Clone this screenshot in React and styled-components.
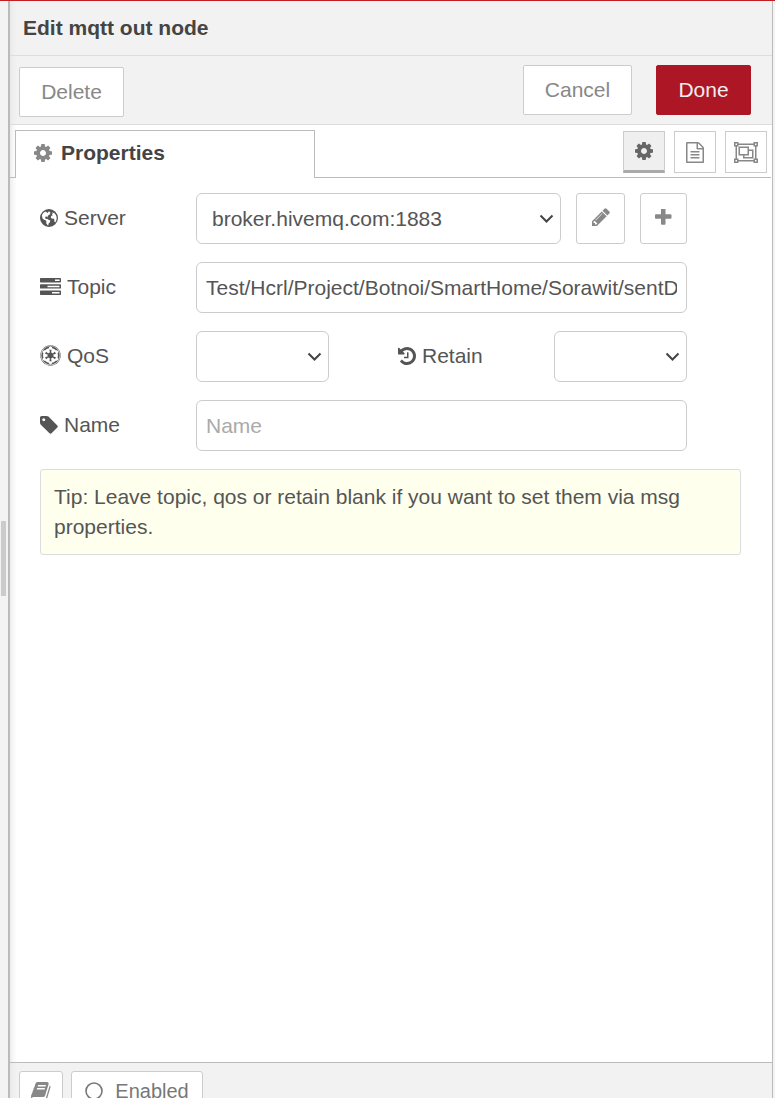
import React from "react";
import styled, { createGlobalStyle } from "styled-components";
import { FaEmpire } from "react-icons/fa";

const Global = createGlobalStyle`
  *, *::before, *::after { box-sizing: border-box; }
  body { margin: 0; background: #f3f3f3; overflow: hidden; }
  body, button, input { font-family: "Liberation Sans", Arial, sans-serif; font-size: 21px; color: #555; }
`;

const Page = styled.div`
  height: 1098px;
  display: flex;
  border-top: 1px solid #c02020;
  background: #f3f3f3;
  overflow: hidden;
`;
const Gutter = styled.div`
  width: 8px;
  flex: none;
  padding-top: 520px;
`;
const ScrollThumb = styled.div`
  width: 5px;
  height: 75px;
  margin-left: 1px;
  background: #cbcbcb;
`;
const Tray = styled.main`
  width: 765px;
  flex: none;
  display: flex;
  flex-direction: column;
  background: #fff;
  border-left: 2px solid #bbb;
  border-right: 1px solid #bbb;
  box-shadow: inset 7px 0 7px -6px rgba(0, 0, 0, 0.12);
`;
const Header = styled.header`
  height: 55px;
  padding: 0 13px 1px;
  display: flex;
  align-items: center;
  font-weight: bold;
  color: #444;
  background: rgba(229, 229, 229, 0.5);
  border-bottom: 1px solid #ddd;
`;
const Toolbar = styled.div`
  height: 69px;
  padding: 9px 21px 0 9px;
  display: flex;
  align-items: flex-start;
  background: rgba(229, 229, 229, 0.5);
  border-bottom: 1px solid #ddd;
`;
const Button = styled.button`
  width: ${(p) => p.$width}px;
  height: 50px;
  padding: 0;
  margin: ${(p) => p.$margin || 0};
  border: 1px solid ${(p) => (p.$primary ? "#ad1625" : "#ccc")};
  border-radius: 2px;
  background: ${(p) => (p.$primary ? "#ad1625" : "#fff")};
  color: ${(p) => (p.$primary ? "#eee" : "#888")};
`;
const TabBar = styled.div`
  height: 53px;
  padding: 5px 5px 0 0;
  margin-right: 1px;
  display: flex;
`;
const TabLine = styled.div`
  width: ${(p) => p.$width}px;
  flex: ${(p) => (p.$width ? "none" : 1)};
  display: flex;
  justify-content: flex-end;
  gap: 9px;
  padding: 1px 0 0;
  border-bottom: 1px solid #bbb;
  margin-right: ${(p) => (p.$width ? 0 : "-5px")};
  padding-right: ${(p) => (p.$width ? 0 : "4px")};
`;
const Tab = styled.div`
  width: 300px;
  padding: 0 0 3px 18px;
  display: flex;
  align-items: center;
  gap: 9px;
  border: 1px solid #bbb;
  border-bottom: 0;
  font-weight: bold;
  color: #444;
`;
const TabButton = styled.button`
  width: 42px;
  height: 42px;
  padding: 0;
  display: flex;
  align-items: center;
  justify-content: center;
  border: 1px solid #ccc;
  border-bottom: ${(p) => (p.$active ? "3px solid #aaa" : "1px solid #ccc")};
  background: ${(p) => (p.$active ? "#efefef" : "#fff")};
  color: ${(p) => (p.$active ? "#666" : "#888")};
`;
const Form = styled.form`
  flex: 1;
  padding: 15px 31px 0 30px;
`;
const Row = styled.div`
  height: 51px;
  margin-bottom: 18px;
  display: flex;
  align-items: stretch;
`;
const Label = styled.label`
  width: 156px;
  padding-bottom: 2px;
  display: flex;
  align-items: center;
  gap: ${(p) => p.$gap || 6}px;
`;
const Select = styled.div`
  width: ${(p) => p.$width}px;
  padding: 0 6px 0 15px;
  margin-right: ${(p) => p.$after || 0}px;
  display: flex;
  align-items: center;
  justify-content: space-between;
  border: 1px solid #ccc;
  border-radius: 6px;
`;
const Input = styled.input`
  width: 491px;
  padding: 0 9px;
  border: 1px solid #ccc;
  border-radius: 6px;
  background: transparent;
  outline: none;
  &::placeholder { color: #aaa; opacity: 1; }
`;
const SquareButton = styled.button`
  width: ${(p) => p.$width}px;
  margin-left: 15px;
  padding: 0 0 3px;
  display: flex;
  align-items: center;
  justify-content: center;
  border: 1px solid #ccc;
  border-radius: 3px;
  background: #fff;
  color: #888;
`;
const Tip = styled.div`
  width: 701px;
  height: 86px;
  padding: 12px 13px;
  border: 1px solid #ddd;
  border-radius: 3px;
  background: #ffffee;
  line-height: 30px;
`;
const Footer = styled.footer`
  height: 36px;
  flex: none;
  padding: 8px 9px 0;
  display: flex;
  gap: 8px;
  border-top: 1px solid #bbb;
  background: rgba(229, 229, 229, 0.5);
`;
const FooterButton = styled.button`
  width: ${(p) => p.$width}px;
  height: 42px;
  flex: none;
  padding: 0 0 2px;
  display: flex;
  align-items: center;
  justify-content: center;
  gap: 12px;
  border: 1px solid #ccc;
  border-radius: 3px;
  background: #fff;
  color: ${(p) => p.$color || "#777"};
  font-size: 20px;
`;
const Svg = styled.svg`
  display: block;
  flex: none;
  fill: currentColor;
`;

const paths = {
  cog: "M1152 896q0-106-75-181t-181-75-181 75-75 181 75 181 181 75 181-75 75-181zm512-109v222q0 12-8 23t-20 13l-185 28q-19 54-39 91 35 50 107 138 10 12 10 25t-9 23q-27 37-99 108t-94 71q-12 0-26-9l-138-108q-44 23-91 38-16 136-29 186-7 28-36 28h-222q-14 0-24.5-8.5t-11.5-21.5l-28-184q-49-16-90-37l-141 107q-10 9-25 9-14 0-25-11-126-114-165-168-7-10-7-23 0-12 8-23 15-21 51-66.5t54-70.5q-27-50-41-99l-183-27q-13-2-21-12.5t-8-23.5v-222q0-12 8-23t19-13l186-28q14-46 39-92-40-57-107-138-10-12-10-24 0-10 9-23 26-36 98.5-107.5t94.5-71.5q13 0 26 10l138 107q44-23 91-38 16-136 29-186 7-28 36-28h222q14 0 24.5 8.5t11.5 21.5l28 184q49 16 90 37l142-107q9-9 24-9 13 0 25 10 129 119 165 170 7 8 7 22 0 12-8 23-15 21-51 66.5t-54 70.5q26 50 41 98l183 28q13 2 21 12.5t8 23.5z",
  file: "M1596 380q28 28 48 76t20 88v1152q0 40-28 68t-68 28h-1344q-40 0-68-28t-28-68v-1600q0-40 28-68t68-28h896q40 0 88 20t76 48zm-444-244v376h376q-10-29-22-41l-313-313q-12-12-41-22zm384 1528v-1024h-416q-40 0-68-28t-28-68v-416h-768v1536h1280zm-1024-864q0-14 9-23t23-9h704q14 0 23 9t9 23v64q0 14-9 23t-23 9h-704q-14 0-23-9t-9-23v-64zm736 224q14 0 23 9t9 23v64q0 14-9 23t-23 9h-704q-14 0-23-9t-9-23v-64q0-14 9-23t23-9h704zm0 256q14 0 23 9t9 23v64q0 14-9 23t-23 9h-704q-14 0-23-9t-9-23v-64q0-14 9-23t23-9h704z",
  pencil: "M491 1536l91-91-235-235-91 91v107h128v128h107zm523-928q0-22-22-22-10 0-17 7l-542 542q-7 7-7 17 0 22 22 22 10 0 17-7l542-542q7-7 7-17zm-54-192l416 416-832 832h-416v-416zm683 96q0 53-37 90l-166 166-416-416 166-165q36-38 90-38 53 0 91 38l235 234q37 39 37 91z",
  plus: "M1600 736v192q0 40-28 68t-68 28h-416v416q0 40-28 68t-68 28h-192q-40 0-68-28t-28-68v-416h-416q-40 0-68-28t-28-68v-192q0-40 28-68t68-28h416v-416q0-40 28-68t68-28h192q40 0 68 28t28 68v416h416q40 0 68 28t28 68z",
  tag: "M576 448q0-53-37.5-90.5t-90.5-37.5-90.5 37.5-37.5 90.5 37.5 90.5 90.5 37.5 90.5-37.5 37.5-90.5zm1067 576q0 53-37 90l-491 492q-39 37-91 37-53 0-90-37l-715-716q-38-37-64.5-101t-26.5-117v-416q0-52 38-90t90-38h416q53 0 117 26.5t102 64.5l715 714q37 39 37 91z",
  history: "M1664 896q0 156-61 298t-164 245-245 164-298 61q-172 0-327-72.5t-264-204.5q-7-10-6.5-22.5t8.5-20.5l137-138q10-9 25-9 16 2 23 12 73 95 179 147t225 52q104 0 198.5-40.5t163.5-109.5 109.5-163.5 40.5-198.5-40.5-198.5-109.5-163.5-163.5-109.5-198.5-40.5q-98 0-188 35.5t-160 101.5l137 138q31 30 14 69-17 40-59 40h-448q-26 0-45-19t-19-45v-448q0-42 40-59 39-17 69 14l130 129q107-101 244.5-156.5t284.5-55.5q156 0 298 61t245 164 164 245 61 298zm-640-288v448q0 14-9 23t-23 9h-320q-14 0-23-9t-9-23v-64q0-14 9-23t23-9h224v-352q0-14 9-23t23-9h64q14 0 23 9t9 23z",
  book: "M1703 478q40 57 18 129l-275 906q-19 64-76.5 107.5t-122.5 43.5h-923q-77 0-148.5-53.5t-99.5-131.5q-24-67-2-127 0-4 3-27t4-37q1-8-3-21.5t-3-19.5q2-11 8-21t16.5-23.5 16.5-23.5q23-38 45-91.5t30-91.5q3-10 .5-30t-.5-28q3-11 17-28t17-23q21-36 42-92t25-90q1-9-2.5-32t.5-28q4-13 22-30.5t22-22.5q19-26 42.5-84.5t27.5-96.5q1-8-3-25.5t-2-26.5q2-8 9-18t18-23 17-21q8-12 16.5-30.5t15-35 16-36 19.5-32 26.5-23.5 36-11.5 47.5 5.5l-1 3q38-9 51-9h761q74 0 114 56t18 130l-274 906q-36 119-71.5 153.5t-128.5 34.5h-869q-27 0-38 15-11 16-1 43 24 70 144 70h923q29 0 56-15.5t35-41.5l300-987q7-22 5-57 38 15 59 43zm-1064 2q-4 13 2 22.5t20 9.5h608q13 0 25.5-9.5t16.5-22.5l21-64q4-13-2-22.5t-20-9.5h-608q-13 0-25.5 9.5t-16.5 22.5zm-83 256q-4 13 2 22.5t20 9.5h608q13 0 25.5-9.5t16.5-22.5l21-64q4-13-2-22.5t-20-9.5h-608q-13 0-25.5 9.5t-16.5 22.5z",
};

/* Each glyph is cropped to its own advance box: x, y, width, height in 1792 units. */
const boxes = {
  cog: [128, 128, 1536, 1536],
  file: [128, 0, 1536, 1792],
  pencil: [128, 128, 1536, 1536],
  plus: [192, 192, 1408, 1408],
  tag: [128, 128, 1536, 1536],
  history: [128, 128, 1536, 1536],
  book: [64, 128, 1664, 1536],
};

function Icon({ name, scale = 85.33 }) {
  const b = boxes[name];
  return (
    <Svg width={b[2] / scale} height={b[3] / scale} viewBox={b.join(" ")}>
      <path d={paths[name]} />
    </Svg>
  );
}

const Globe = () => (
  <Svg width="18" height="18" viewBox="0 0 18 18">
    <path fillRule="evenodd" d="M9 0a9 9 0 1 1 0 18A9 9 0 0 1 9 0zM5.4 2.4 3.2 4 1.9 6.3l.5 2.9 1.6 1.5 1.6.6.8 1.3-.2 1.6 1.4 2 .7.2.2-1.7 1.5-1.6.3-1.5-1.8-.9-1.4-.9-1.2.1-.8-1 .3-1.2 1.5-.1.5.8.5-1.6 1.6-1.2 1.1-.7-.9-.8.8-.6-1.2-1-1 .2-.4 1.2-1.3-.7zM12 3.2l.8 1.2-.9.8.8 1-1.5.7-.4 1.7 1.2 1.1 1.6-.2.7 1 .1 2.2.8.7 1.2-2.1.3-2.7-.7-2.4-1.5-2z" />
  </Svg>
);

const Tasks = () => (
  <Svg width="21" height="17" viewBox="0 0 21 17">
    <path fillRule="evenodd" d="M.7 0h19.6q.7 0 .7.7v3q0 .7-.7.7H.7Q0 4.400 0 3.700v-3Q0 0 .7 0zM15 1.500v1.500h4.600V1.500zM.7 6.200h19.6q.7 0 .7.7v3q0 .7-.7.7H.7q-.7 0-.7-.7v-3q0-.7.7-.7zM7.500 7.700v1.500h12V7.700zM.7 12.500h19.6q.7 0 .7.700v3q0 .7-.7.7H.7q-.7 0-.7-.7v-3q0-.7.7-.7zM12 14v1.500h7.500V14z" />
  </Svg>
);

const ObjectGroup = () => (
  <Svg width="24" height="21" viewBox="0 0 2048 1792">
    <path fillRule="evenodd" d="M2048 384h-128v1024h128v384h-384v-128H384v128H0v-384h128V384H0V0h384v128h1280V0h384zM1792 128v128h128V128zM128 128v128h128V128zM256 1664v-128H128v128zM1664 1536v-128h128V384h-128V256H384v128H256v1024h128v128zM1920 1664v-128h-128v128zM1280 640h384v768H768v-256H384V384h896zM512 1024h640V512H512zM1536 1280V768h-256v384H896v128z" />
  </Svg>
);

const Chevron = () => (
  <Svg width="15" height="9" viewBox="0 0 15 9">
    <path d="M1.500 1.500 7.500 7.500 13.500 1.500" fill="none" stroke="#444" strokeWidth="2" />
  </Svg>
);

export default function App() {
  return (
    <>
      <Global />
      <Page>
        <Gutter><ScrollThumb /></Gutter>
        <Tray>
          <Header>Edit mqtt out node</Header>
          <Toolbar>
            <Button $width={105} $margin="2px auto 0 0">Delete</Button>
            <Button $width={109} $margin="0 24px 0 0">Cancel</Button>
            <Button $width={95} $primary>Done</Button>
          </Toolbar>
          <TabBar>
            <TabLine $width={5} />
            <Tab><Svg as="span" style={{ color: "#888" }}><Icon name="cog" /></Svg>Properties</Tab>
            <TabLine>
              <TabButton $active><Icon name="cog" /></TabButton>
              <TabButton><Icon name="file" /></TabButton>
              <TabButton><ObjectGroup /></TabButton>
            </TabLine>
          </TabBar>
          <Form>
            <Row>
              <Label><Globe />Server</Label>
              <Select $width={365}>broker.hivemq.com:1883<Chevron /></Select>
              <SquareButton type="button" $width={49}><Icon name="pencil" /></SquareButton>
              <SquareButton type="button" $width={47}><Icon name="plus" /></SquareButton>
            </Row>
            <Row>
              <Label><Tasks />Topic</Label>
              <Input readOnly value="Test/Hcrl/Project/Botnoi/SmartHome/Sorawit/sentData" />
            </Row>
            <Row>
              <Label><FaEmpire size={21} />QoS</Label>
              <Select $width={133} $after={69}><span /><Chevron /></Select>
              <Label><Icon name="history" />Retain</Label>
              <Select $width={133}><span /><Chevron /></Select>
            </Row>
            <Row>
              <Label><Icon name="tag" />Name</Label>
              <Input placeholder="Name" />
            </Row>
            <Tip>Tip: Leave topic, qos or retain blank if you want to set them via msg properties.</Tip>
          </Form>
          <Footer>
            <FooterButton $width={44} $color="#888"><Icon name="book" /></FooterButton>
            <FooterButton $width={132}>
              <Svg width="18" height="18" viewBox="0 0 18 18"><circle cx="9" cy="9" r="8" fill="none" stroke="currentColor" strokeWidth="1.600" /></Svg>
              Enabled
            </FooterButton>
          </Footer>
        </Tray>
      </Page>
    </>
  );
}
